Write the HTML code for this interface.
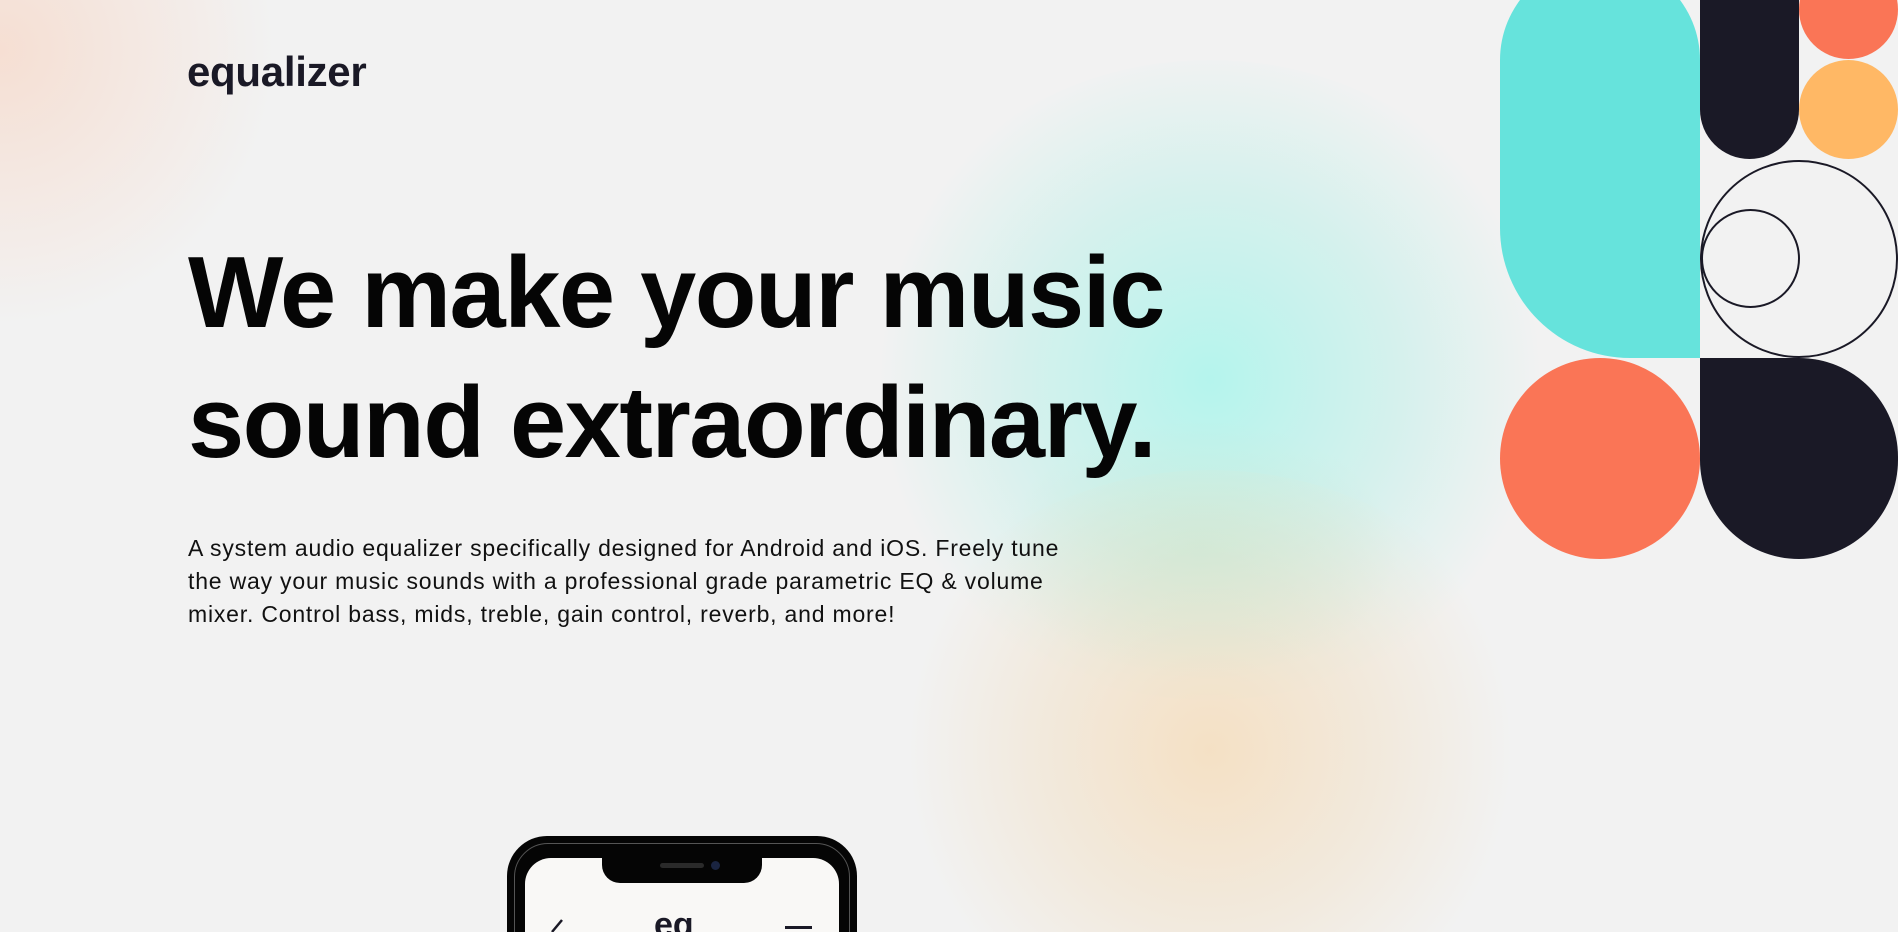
<!DOCTYPE html>
<html><head><meta charset="utf-8"><style>
*{margin:0;padding:0;box-sizing:border-box}
html,body{width:1898px;height:932px;overflow:hidden}
body{background:#f2f2f2;position:relative;font-family:"Liberation Sans",sans-serif;color:#000}
.blob{position:absolute;border-radius:50%}
.logo{position:absolute;left:187px;top:48px;font-size:42px;font-weight:bold;color:#1a1926;letter-spacing:-0.3px}
h1{position:absolute;left:188px;top:228px;font-size:101px;line-height:130px;font-weight:bold;letter-spacing:-1.5px;color:#050505}
p{position:absolute;left:188px;top:532px;width:895px;font-size:23px;line-height:33px;color:#111;letter-spacing:0.8px}
.s{position:absolute}
</style></head><body>
<div class="blob" style="left:-300px;top:-250px;width:600px;height:600px;background:radial-gradient(circle,rgba(248,210,190,0.6),rgba(242,242,242,0) 65%)"></div>
<div class="blob" style="left:860px;top:60px;width:700px;height:640px;background:radial-gradient(circle,rgba(160,245,235,0.75) 0%,rgba(185,240,232,0.5) 40%,rgba(242,242,242,0) 70%)"></div>
<div class="blob" style="left:880px;top:470px;width:660px;height:560px;background:radial-gradient(circle,rgba(245,220,185,0.8) 0%,rgba(242,225,200,0.5) 40%,rgba(242,242,242,0) 70%)"></div>
<div class="blob" style="left:1000px;top:420px;width:400px;height:260px;background:radial-gradient(ellipse,rgba(200,230,205,0.5),rgba(242,242,242,0) 70%)"></div>

<div class="logo">equalizer</div>
<h1>We make your music<br>sound extraordinary.</h1>
<p>A system audio equalizer specifically designed for Android and iOS. Freely tune the way your music sounds with a professional grade parametric EQ &amp; volume mixer. Control bass, mids, treble, gain control, reverb, and more!</p>

<!-- shapes -->
<div class="s" style="left:1500px;top:-40px;width:200px;height:398px;background:#66e3dc;border-radius:100px 100px 0 130px / 100px 100px 0 130px"></div>
<div class="s" style="left:1700px;top:-60px;width:99px;height:219px;background:#1a1926;border-radius:0 0 50px 50px"></div>
<div class="s" style="left:1799px;top:-40px;width:99px;height:99px;background:#fa7556;border-radius:50%"></div>
<div class="s" style="left:1799px;top:60px;width:99px;height:99px;background:#ffb865;border-radius:50%"></div>
<div class="s" style="left:1700px;top:160px;width:198px;height:198px;border:2px solid #1a1926;border-radius:50%"></div>
<div class="s" style="left:1701px;top:209px;width:99px;height:99px;border:2px solid #1a1926;border-radius:50%"></div>
<div class="s" style="left:1500px;top:358px;width:200px;height:201px;background:#fa7556;border-radius:50%"></div>
<div class="s" style="left:1700px;top:358px;width:198px;height:201px;background:#1a1926;border-radius:0 100px 100px 100px"></div>

<!-- phone -->
<div class="s" style="left:507px;top:836px;width:350px;height:140px;background:#050505;border-radius:40px"></div>
<div class="s" style="left:514px;top:843px;width:336px;height:130px;border:1px solid #555;border-radius:34px"></div>
<div class="s" style="left:525px;top:858px;width:314px;height:120px;background:#f9f8f6;border-radius:26px"></div>
<div class="s" style="left:602px;top:850px;width:160px;height:33px;background:#050505;border-radius:0 0 18px 18px"></div>
<div class="s" style="left:660px;top:863px;width:44px;height:5px;background:#2a2a2a;border-radius:3px"></div>
<div class="s" style="left:711px;top:861px;width:9px;height:9px;background:#1a2440;border-radius:50%"></div>
<div class="s" style="left:654px;top:908px;font-size:34px;font-weight:bold;color:#1a1926;line-height:34px">eq</div>
<div class="s" style="left:785px;top:926px;width:27px;height:3px;background:#1a1926"></div>
<svg class="s" style="left:548px;top:918px" width="20" height="20"><path d="M14 2 L4 14" stroke="#1a1926" stroke-width="2.5" fill="none"/></svg>
</body></html>
